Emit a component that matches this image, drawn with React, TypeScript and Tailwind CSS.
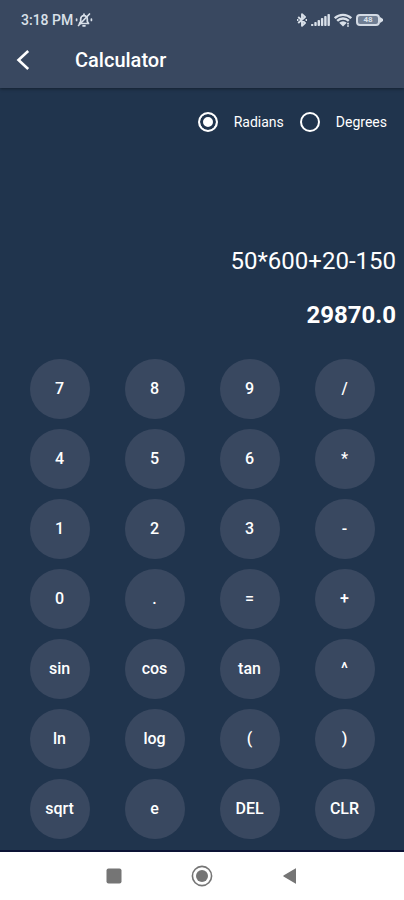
import { useState } from "react";

const KEYS = [
  "7", "8", "9", "/",
  "4", "5", "6", "*",
  "1", "2", "3", "-",
  "0", ".", "=", "+",
  "sin", "cos", "tan", "^",
  "ln", "log", "(", ")",
  "sqrt", "e", "DEL", "CLR",
];

function MutedBellIcon() {
  return (
    <svg className="h-4 w-[18px]" viewBox="0 0 18 16" fill="none" stroke="currentColor" strokeWidth="1.7" strokeLinecap="round" strokeLinejoin="round" aria-hidden="true">
      <path d="M4.5 11.5h9L12.3 9.5V7a3.3 3.3 0 0 0-6.6 0v2.5z" />
      <path d="M8 13.8h2M9 2v1M3.5 13.5 14.5 2M1.6 7v1.5M16.4 7v1.5" />
    </svg>
  );
}

function BluetoothIcon() {
  return (
    <svg className="h-[14px] w-[10px]" viewBox="0 0 10 14" fill="none" stroke="currentColor" strokeWidth="1.9" strokeLinejoin="round" aria-hidden="true">
      <path d="M1.2 4 8 10 5 12.8V1.2L8 4 1.2 10" />
      <path d="M0 7h1.4M8.6 7H10" />
    </svg>
  );
}

function SignalIcon() {
  return (
    <svg className="h-3 w-[19px]" viewBox="0 0 19 12" fill="currentColor" aria-hidden="true">
      <rect x="0" y="10" width="2.4" height="2" rx=".8" />
      <rect x="3.3" y="8" width="2.4" height="4" rx=".8" />
      <rect x="6.6" y="6" width="2.4" height="6" rx=".8" />
      <rect x="9.9" y="4" width="2.4" height="8" rx=".8" />
      <rect x="13.2" y="2" width="2.4" height="10" rx=".8" />
      <rect x="16.5" y="0" width="2.4" height="12" rx=".8" />
    </svg>
  );
}

function WifiIcon() {
  return (
    <svg className="h-[14px] w-[18px]" viewBox="0 0 18 14" fill="none" stroke="currentColor" strokeWidth="2.3" aria-hidden="true">
      <path d="M.8 5.2a11.6 11.6 0 0 1 16.4 0M3.2 7.9a8.2 8.2 0 0 1 11.6 0" />
      <path d="M5.2 9.7a5.4 5.4 0 0 1 7.6 0L9 13.5z" fill="currentColor" stroke="none" />
      <path d="M14 9.8v4" strokeWidth="1.8" strokeDasharray="1.6 .8" />
    </svg>
  );
}

function Battery() {
  return (
    <span className="flex items-center">
      <span className="flex h-3 w-6 items-center justify-center rounded-[4px] border-2 border-[#d3dae4] bg-[#707e93] text-[8px] font-bold leading-none">
        48
      </span>
      <svg className="h-[6px] w-[3px]" viewBox="0 0 3 6" fill="currentColor" aria-hidden="true">
        <path d="M0 0 3 2v2L0 6z" />
      </svg>
    </span>
  );
}

function UnitOption({ label, checked, onChange }: { label: string; checked: boolean; onChange: () => void }) {
  return (
    <label className="flex items-center gap-4 text-sm">
      <input
        type="radio"
        name="unit"
        checked={checked}
        onChange={onChange}
        className="h-5 w-5 appearance-none rounded-full border-2 border-white checked:bg-white checked:shadow-[inset_0_0_0_3px_#20344d]"
      />
      {label}
    </label>
  );
}

export default function App() {
  const [unit, setUnit] = useState("Radians");

  return (
    <div className="flex min-h-screen flex-col bg-[#20344d] font-['Roboto','Liberation_Sans',sans-serif] text-white">
      <header className="bg-[#394860] shadow-[0_1px_3px_rgba(0,0,0,0.4)]">
        <div className="flex h-8 items-end justify-between px-[21px] text-[#d9e0e9]">
          <div className="flex h-6 items-center gap-[2px]">
            <span className="text-sm font-medium">3:18 PM</span>
            <MutedBellIcon />
          </div>
          <div className="flex h-6 items-center gap-1">
            <BluetoothIcon />
            <SignalIcon />
            <WifiIcon />
            <Battery />
          </div>
        </div>
        <div className="flex h-14 items-center gap-11 pl-4">
          <button type="button" aria-label="Back" className="flex h-6 w-[15px] items-center">
            <svg className="h-5 w-[14px]" viewBox="0 0 14 20" fill="none" stroke="currentColor" strokeWidth="2.6" aria-hidden="true">
              <path d="M12.2 1 2.5 10l9.7 9" />
            </svg>
          </button>
          <h1 className="text-xl font-medium">Calculator</h1>
        </div>
      </header>

      <main className="flex grow flex-col">
        <fieldset className="flex justify-end gap-4 pr-[17px] pt-6">
          <UnitOption label="Radians" checked={unit === "Radians"} onChange={() => setUnit("Radians")} />
          <UnitOption label="Degrees" checked={unit === "Degrees"} onChange={() => setUnit("Degrees")} />
        </fieldset>

        <div className="flex flex-col gap-[22px] pr-2 pt-[113px] text-right text-2xl">
          <p>50*600+20-150</p>
          <output className="font-bold">29870.0</output>
        </div>

        <div className="grid grid-cols-4 justify-items-center gap-y-[10px] px-3 pb-[11px] pt-7">
          {KEYS.map((key) => (
            <button key={key} type="button" className="h-[60px] w-[60px] rounded-full bg-[#394860] text-base font-medium">
              {key}
            </button>
          ))}
        </div>
      </main>

      <nav className="flex h-[50px] items-center justify-center gap-[66px] border-t-2 border-[#0c1335] bg-white text-[#757575]">
        <button type="button" aria-label="Recent apps" className="flex h-6 w-[22px] items-center justify-center">
          <svg className="h-4 w-4" viewBox="0 0 16 16" aria-hidden="true">
            <rect x=".5" y=".5" width="15" height="15" rx="2" fill="currentColor" />
          </svg>
        </button>
        <button type="button" aria-label="Home" className="flex h-6 w-[22px] items-center justify-center">
          <svg className="h-[22px] w-[22px]" viewBox="0 0 22 22" fill="none" stroke="currentColor" aria-hidden="true">
            <circle cx="11" cy="11" r="9.6" strokeWidth="1.6" />
            <circle cx="11" cy="11" r="6" fill="currentColor" stroke="none" />
          </svg>
        </button>
        <button type="button" aria-label="Back to previous app" className="flex h-6 w-[22px] items-center justify-center">
          <svg className="h-4 w-[14px]" viewBox="0 0 14 16" fill="currentColor" aria-hidden="true">
            <path d="M13 .5v15Q13 16 12.4 15.6L.5 8.5Q0 8 .5 7.5L12.4.4Q13 0 13 .5z" />
          </svg>
        </button>
      </nav>
    </div>
  );
}
